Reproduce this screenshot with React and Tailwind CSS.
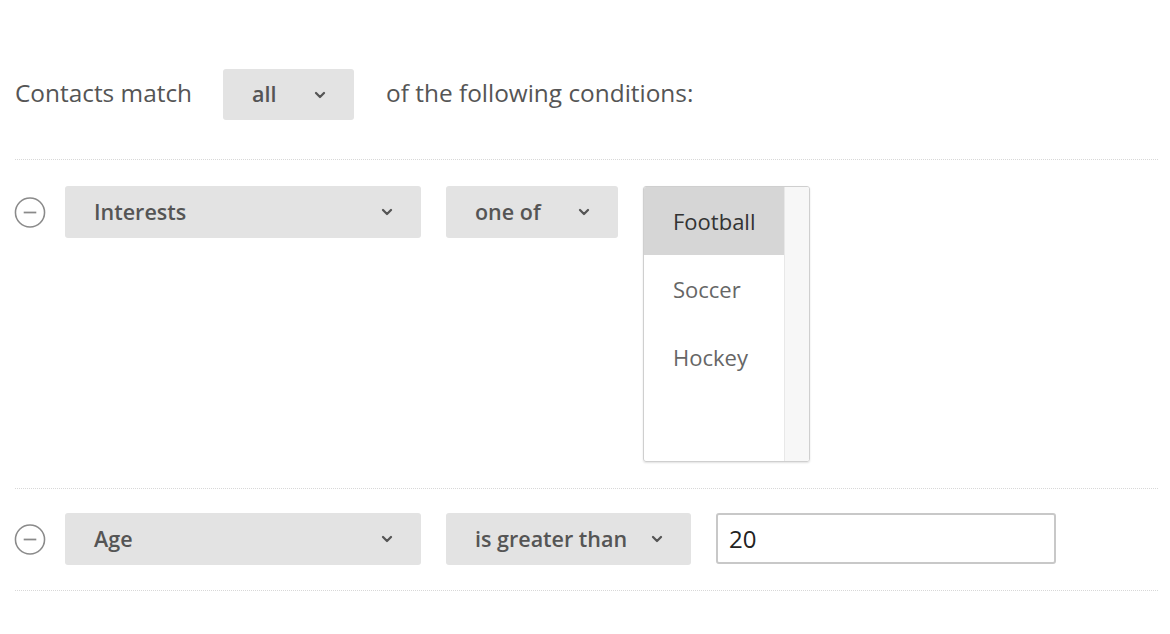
import React from "react";
import { ChevronDown } from "lucide-react";

const font = { fontFamily: '"Open Sans", "Noto Sans", sans-serif' };

function Select({ label, width }) {
  return (
    <div
      className={`h-[52px] ${width} pl-[29px] pr-[26px] bg-[#e3e3e3] rounded-[3px] flex items-center justify-between shrink-0`}
    >
      <span className="text-[21.5px] font-semibold text-[#555] whitespace-nowrap">{label}</span>
      <ChevronDown size={16} strokeWidth={3.4} className="text-[#555]" />
    </div>
  );
}

function MinusCircle() {
  return (
    <div className="h-[52px] w-[32px] flex items-center shrink-0">
      <svg width="33" height="33" viewBox="0 0 33 33">
        <circle cx="16.5" cy="16.5" r="15" fill="none" stroke="#8a8a8a" strokeWidth="1.6" />
        <line x1="10" y1="16.5" x2="23" y2="16.5" stroke="#8a8a8a" strokeWidth="1.8" />
      </svg>
    </div>
  );
}

export default function App() {
  const options = ["Football", "Soccer", "Hockey"];
  return (
    <div className="w-[1170px] h-[634px] bg-white pt-[69px] pl-[15px]" style={font}>
      <div className="w-[1143px]">
        {/* Header */}
        <div className="flex items-center h-[51px]">
          <span className="text-[24.4px] text-[#555] -mt-[3px]">Contacts match</span>
          <div className="ml-[31px] h-[51px] w-[131px] pl-[29px] pr-[26px] bg-[#e3e3e3] rounded-[3px] flex items-center justify-between">
            <span className="text-[21.5px] font-semibold text-[#555]">all</span>
            <ChevronDown size={16} strokeWidth={3.4} className="text-[#555]" />
          </div>
          <span className="ml-[32px] text-[24.4px] text-[#555] -mt-[3px]">of the following conditions:</span>
        </div>

        <div className="mt-[39px] border-t border-dotted border-[#d8d8d8]" />

        {/* Row 1 */}
        <div className="flex items-start pt-[26px] pb-[26px] -ml-[1px]">
          <MinusCircle />
          <div className="ml-[19px] flex items-start gap-[25px]">
            <Select label="Interests" width="w-[356px]" />
            <Select label="one of" width="w-[172px]" />
            <div className="w-[167px] h-[276px] border border-[#cfcfcf] rounded-[3px] shadow-[0_1px_2px_rgba(0,0,0,0.12)] flex overflow-hidden">
              <div className="flex-1 flex flex-col">
                {options.map((o, i) => (
                  <div
                    key={o}
                    className={`h-[68px] pl-[29px] flex items-center text-[22px] ${
                      i === 0 ? "bg-[#d6d6d6] text-[#333] font-medium" : "text-[#666]"
                    }`}
                  >
                    {o}
                  </div>
                ))}
              </div>
              <div className="w-[25px] bg-[#f7f7f7] border-l border-[#e8e8e8]" />
            </div>
          </div>
        </div>

        <div className="border-t border-dotted border-[#d8d8d8]" />

        {/* Row 2 */}
        <div className="flex items-start pt-[24px] pb-[25px] -ml-[1px]">
          <MinusCircle />
          <div className="ml-[19px] flex items-start gap-[25px]">
            <Select label="Age" width="w-[356px]" />
            <Select label="is greater than" width="w-[245px]" />
            <div className="w-[340px] h-[51px] border-2 border-[#c8c8c8] rounded-[3px] pl-[11px] flex items-center">
              <span className="text-[24px] text-[#222]">20</span>
            </div>
          </div>
        </div>

        <div className="border-t border-dotted border-[#d8d8d8]" />
      </div>
    </div>
  );
}
